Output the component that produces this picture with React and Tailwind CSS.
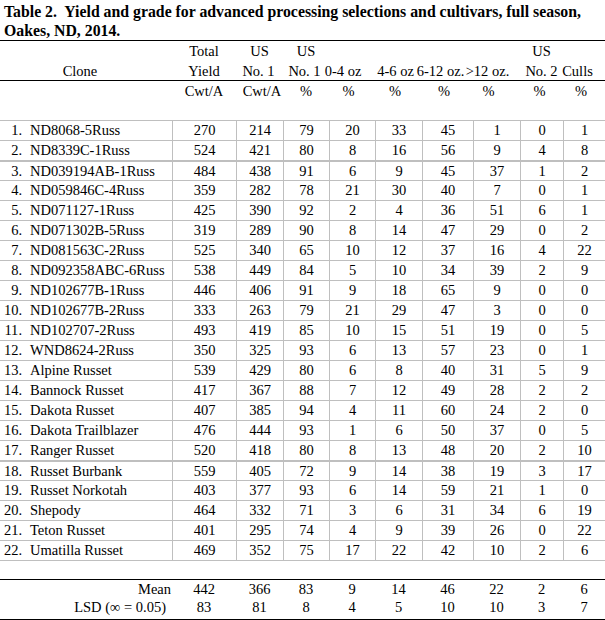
const rows = [
  ["ND8068-5Russ", 270, 214, 79, 20, 33, 45, 1, 0, 1],
  ["ND8339C-1Russ", 524, 421, 80, 8, 16, 56, 9, 4, 8],
  ["ND039194AB-1Russ", 484, 438, 91, 6, 9, 45, 37, 1, 2],
  ["ND059846C-4Russ", 359, 282, 78, 21, 30, 40, 7, 0, 1],
  ["ND071127-1Russ", 425, 390, 92, 2, 4, 36, 51, 6, 1],
  ["ND071302B-5Russ", 319, 289, 90, 8, 14, 47, 29, 0, 2],
  ["ND081563C-2Russ", 525, 340, 65, 10, 12, 37, 16, 4, 22],
  ["ND092358ABC-6Russ", 538, 449, 84, 5, 10, 34, 39, 2, 9],
  ["ND102677B-1Russ", 446, 406, 91, 9, 18, 65, 9, 0, 0],
  ["ND102677B-2Russ", 333, 263, 79, 21, 29, 47, 3, 0, 0],
  ["ND102707-2Russ", 493, 419, 85, 10, 15, 51, 19, 0, 5],
  ["WND8624-2Russ", 350, 325, 93, 6, 13, 57, 23, 0, 1],
  ["Alpine Russet", 539, 429, 80, 6, 8, 40, 31, 5, 9],
  ["Bannock Russet", 417, 367, 88, 7, 12, 49, 28, 2, 2],
  ["Dakota Russet", 407, 385, 94, 4, 11, 60, 24, 2, 0],
  ["Dakota Trailblazer", 476, 444, 93, 1, 6, 50, 37, 0, 5],
  ["Ranger Russet", 520, 418, 80, 8, 13, 48, 20, 2, 10],
  ["Russet Burbank", 559, 405, 72, 9, 14, 38, 19, 3, 17],
  ["Russet Norkotah", 403, 377, 93, 6, 14, 59, 21, 1, 0],
  ["Shepody", 464, 332, 71, 3, 6, 31, 34, 6, 19],
  ["Teton Russet", 401, 295, 74, 4, 9, 39, 26, 0, 22],
  ["Umatilla Russet", 469, 352, 75, 17, 22, 42, 10, 2, 6],
];

const SERIF = "font-['Liberation_Serif']";

const GRID =
  "grid grid-cols-[172px_64px_47px_46px_46px_47px_51px_47px_43px_42px] font-['Liberation_Serif']";

function H({ children, cls = "" }) {
  return (
    <div className="flex justify-center whitespace-nowrap font-['Liberation_Serif']">
      <span className={"font-['Liberation_Serif'] " + cls}>{children}</span>
    </div>
  );
}

export default function App() {
  return (
    <div className="w-[605px] h-[620px] bg-white text-black font-serif text-[14.5px] overflow-hidden">
      <div className="h-[40px] pt-[2px] pl-[4px] font-['Liberation_Serif'] font-bold text-[15.8px] leading-[19px] whitespace-pre">
        {"Table 2.  Yield and grade for advanced processing selections and cultivars, full season,"}
        <br />
        {"Oakes, ND, 2014."}
      </div>
      <div className="border-t border-black">
        <div className={GRID + " h-[20px] leading-[20px]"}>
          <H></H>
          <H>Total</H>
          <H>US</H>
          <H>US</H>
          <H></H>
          <H></H>
          <H></H>
          <H></H>
          <H>US</H>
          <H></H>
        </div>
        <div className={GRID + " h-[19px] leading-[21px]"}>
          <H cls="mr-[12px]">Clone</H>
          <H>Yield</H>
          <H cls="mr-[2px]">No. 1</H>
          <H cls="mr-[3px]">No. 1</H>
          <H cls="mr-[18px]">0-4 oz</H>
          <H cls="mr-[6px]">4-6 oz</H>
          <H cls="mr-[14px]">6-12 oz.</H>
          <H cls="mr-[18px]">&gt;12 oz.</H>
          <H>No. 2</H>
          <H cls="mr-[13px]">Culls</H>
        </div>
      </div>
      <div className="border-t border-black">
        <div className={GRID + " h-[20px] leading-[20px]"}>
          <H></H>
          <H>Cwt/A</H>
          <H cls="ml-[5px]">Cwt/A</H>
          <H>%</H>
          <H cls="mr-[7px]">%</H>
          <H cls="mr-[7px]">%</H>
          <H cls="mr-[7px]">%</H>
          <H cls="mr-[16px]">%</H>
          <H cls="mr-[4px]">%</H>
          <H cls="mr-[6px]">%</H>
        </div>
        <div className="h-[19px]"></div>
      </div>
      <div className="border-b border-[#bfbfbf]">
        {rows.map((r, i) => {
          const thick = i === 2 || i === 17;
          return (
            <div
              key={i}
              className={
                GRID +
                " h-[20px] leading-[19px] " +
                (thick ? "border-t-2 border-[#bfbfbf]" : "border-t border-[#bfbfbf]")
              }
            >
              <div className="flex whitespace-nowrap font-['Liberation_Serif']">
                <span className="w-[22px] text-right">{i + 1}.</span>
                <span className="pl-[8px]">{r[0]}</span>
              </div>
              {r.slice(1).map((v, j) => (
                <div key={j} className="border-l border-[#bfbfbf] text-center font-['Liberation_Serif']">
                  {v}
                </div>
              ))}
            </div>
          );
        })}
      </div>
      <div className="h-[18px]"></div>
      <div className={"border-t border-b border-black " + SERIF}>
        <div className={GRID + " h-[18px] leading-[18px]"}>
          <div className="text-right pr-[1px]">Mean</div>
          {[442, 366, 83, 9, 14, 46, 22, 2, 6].map((v, j) => (
            <div key={j} className="text-center">
              {v}
            </div>
          ))}
        </div>
        <div className={GRID + " h-[21px] leading-[19px]"}>
          <div className="text-right pr-[6px] whitespace-nowrap">LSD (∞ = 0.05)</div>
          {[83, 81, 8, 4, 5, 10, 10, 3, 7].map((v, j) => (
            <div key={j} className="text-center">
              {v}
            </div>
          ))}
        </div>
      </div>
    </div>
  );
}
